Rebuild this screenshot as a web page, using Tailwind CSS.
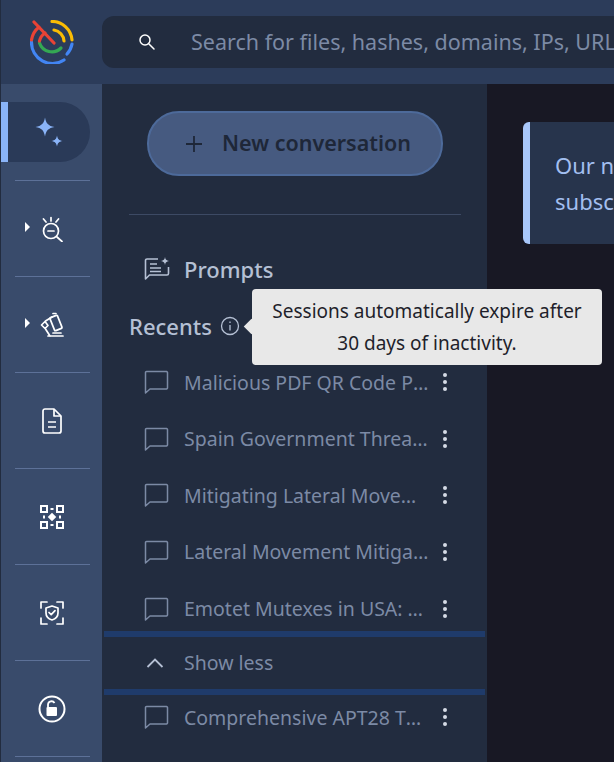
<!DOCTYPE html>
<html><head><meta charset="utf-8"><script src="https://cdn.jsdelivr.net/npm/@tailwindcss/browser@4"></script></head>
<body class="m-0 w-[614px] h-[762px] overflow-hidden bg-[#181824] font-['Noto_Sans',sans-serif]">
<div class="relative flex flex-col w-[614px] h-[762px] overflow-hidden border-l border-l-[#222c3f]">
  <header class="flex h-[84px] shrink-0 items-center bg-[#2c3c5a]">
    <div class="flex w-[101px] shrink-0 justify-center">
      <svg width="44" height="44" viewBox="0 0 44 44" fill="none" stroke-width="3.200" stroke-linecap="round">
        <path d="M22 1.500 A20 20 0 0 1 42 20" stroke="#fbbc04"/>
        <path d="M24 10 A12 12 0 0 1 34 21" stroke="#fbbc04"/>
        <path d="M42 24 A20 20 0 0 1 37 34" stroke="#4285f4"/>
        <path d="M1.500 22 A21 21 0 0 0 34 40" stroke="#4285f4"/>
        <path d="M9.500 23 A13 13 0 0 0 31 28" stroke="#34a853"/>
        <path d="M1.500 20 A21 21 0 0 1 9 7 M4 2 L24 23 M9.500 21 A13 13 0 0 1 15 13" stroke="#ea4335"/>
      </svg>
    </div>
    <div class="flex h-[52px] flex-1 items-center rounded-l-xl bg-[#222c3f]">
      <svg class="ml-[36px] mr-[35px] shrink-0" width="18" height="18" viewBox="0 0 18 18" fill="none" stroke="#fff" stroke-width="1.500" stroke-linecap="round"><circle cx="7" cy="7" r="5"/><path d="M11 11l5 5"/></svg>
      <span class="whitespace-nowrap text-[21.5px] text-[#7c8aa5]">Search for files, hashes, domains, IPs, URLs</span>
    </div>
  </header>
  <div class="flex min-h-0 flex-1">
    <nav class="w-[101px] shrink-0 bg-[#394b6b] pt-[18px]">
      <div class="flex h-[60px] w-[89px] items-center justify-center rounded-r-[30px] border-l-[7px] border-l-[#8ab4f8] bg-[#2a3a58]">
        <svg width="30" height="32" viewBox="0 0 30 32" fill="#8ab4f8"><path d="M11 1.500c1.200 6.200 3.300 8.300 9.500 9.500-6.200 1.200-8.300 3.300-9.500 9.500-1.200-6.200-3.300-8.300-9.500-9.500 6.200-1.200 8.300-3.300 9.500-9.500zM23 19.500c.7 3.600 1.900 4.800 5.500 5.500-3.600.7-4.800 1.900-5.500 5.500-.7-3.600-1.900-4.800-5.500-5.500 3.600-.7 4.800-1.900 5.500-5.500z"/></svg>
      </div>
      <div class="ml-[14px] mr-[12px] mt-[18px] h-px bg-[#5d7198]"></div>
      <div class="relative flex h-[95px] items-center justify-center">
        <span class="absolute left-[24px] top-[41px] h-0 w-0 border-y-[5px] border-l-[5px] border-y-transparent border-l-white"></span>
        <svg width="24" height="26" viewBox="0 0 24 26" fill="none" stroke="#fff" stroke-width="1.700" stroke-linecap="round"><circle cx="11" cy="15" r="7.500"/><path d="M8 15h6M17 21l5 4.500M11 1.500v3.500M3.500 3l2.500 3M18.500 3l-2.500 3"/></svg>
      </div>
      <div class="ml-[14px] mr-[12px] h-px bg-[#5d7198]"></div>
      <div class="relative flex h-[95px] items-center justify-center">
        <span class="absolute left-[24px] top-[41px] h-0 w-0 border-y-[5px] border-l-[5px] border-y-transparent border-l-white"></span>
        <svg width="24" height="26" viewBox="0 0 24 26" fill="none" stroke="#fff" stroke-width="1.700" stroke-linejoin="round" stroke-linecap="round"><rect x="12" y="4" width="8" height="14" rx="1" transform="rotate(-22 16 11)"/><path d="M5 9.500L1.500 13 5 16.500 8 13.500zM5.500 9L12 5M5.500 17L10 24M8 24h15M13 21h8M13 1.500h3"/></svg>
      </div>
      <div class="ml-[14px] mr-[12px] h-px bg-[#5d7198]"></div>
      <div class="flex h-[95px] items-center justify-center">
        <svg width="20" height="26" viewBox="0 0 20 26" fill="none" stroke="#fff" stroke-width="1.700" stroke-linejoin="round"><path d="M3 1h9l7 7v15a2 2 0 0 1-2 2H3a2 2 0 0 1-2-2V3a2 2 0 0 1 2-2z"/><path d="M12 1v7h7M6 14h8M6 19h8"/></svg>
      </div>
      <div class="ml-[14px] mr-[12px] h-px bg-[#5d7198]"></div>
      <div class="flex h-[95px] items-center justify-center">
        <svg width="24" height="24" viewBox="0 0 24 24" fill="none" stroke="#fff" stroke-width="2"><rect x="1" y="1" width="6" height="6"/><rect x="17" y="1" width="6" height="6"/><rect x="1" y="17" width="6" height="6"/><rect x="17" y="17" width="6" height="6"/><path d="M10.500 4h3M10.500 20h3M4 10.500v3M20 10.500v3"/><rect x="9" y="9" width="6" height="6" fill="#fff" stroke="none" transform="rotate(45 12 12)"/></svg>
      </div>
      <div class="ml-[14px] mr-[12px] h-px bg-[#5d7198]"></div>
      <div class="flex h-[95px] items-center justify-center">
        <svg width="24" height="24" viewBox="0 0 24 24" fill="none" stroke="#fff" stroke-width="1.700" stroke-linecap="round" stroke-linejoin="round"><path d="M1 7V1h6M17 1h6v6M1 17v6h6M23 17v6h-6"/><path d="M12 5l6 2v5c0 4-3 6-6 7-3-1-6-3-6-7V7z"/><path d="M9 11.500l2.200 2.200 3.800-4"/></svg>
      </div>
      <div class="ml-[14px] mr-[12px] h-px bg-[#5d7198]"></div>
      <div class="flex h-[95px] items-center justify-center">
        <svg width="28" height="28" viewBox="0 0 28 28" fill="none" stroke="#fff" stroke-width="2"><circle cx="14" cy="14" r="12.500"/><rect x="8.500" y="12" width="10.500" height="9" rx="1" fill="#fff" stroke="none"/><path d="M10 12V9.500a3.500 3.500 0 0 1 6.500-1.500" stroke-width="1.800"/></svg>
      </div>
      <div class="ml-[14px] mr-[12px] h-px bg-[#5d7198]"></div>
    </nav>
    <aside class="w-[385px] shrink-0 bg-[#222c3f]">
      <div class="pl-[45px] pt-[27px]">
        <div class="flex h-[65px] w-[296px] items-center rounded-[32px] border-2 border-[#4d6a9a] bg-[#465a80] pl-[36px]">
          <svg width="18" height="18" viewBox="0 0 18 18" stroke="#1e2738" stroke-width="1.800" fill="none"><path d="M9 1v16M1 9h16"/></svg>
          <span class="ml-[19px] text-[21.5px] font-semibold text-[#1e2738]">New conversation</span>
        </div>
      </div>
      <div class="ml-[27px] mt-[38px] h-px w-[332px] bg-[#3d4a64]"></div>
      <div class="mt-[34px] flex h-[40px] items-center pl-[42px]">
        <svg width="26" height="26" viewBox="0 0 26 26" fill="none" stroke="#b5c0d4" stroke-width="1.600" stroke-linejoin="round"><path d="M14 3H3a1.500 1.500 0 0 0-1.500 1.500V23l4-4H23a1.500 1.500 0 0 0 1.500-1.500V11"/><path d="M6 8h7M6 12h11M6 15.500h11" /><path d="M21 1c.4 2.600 1.400 3.600 4 4-2.600.4-3.600 1.400-4 4-.4-2.600-1.400-3.600-4-4 2.600-.4 3.600-1.400 4-4z" fill="#b5c0d4" stroke="none"/></svg>
        <span class="ml-[14px] text-[22px] font-medium text-[#b5c0d4]">Prompts</span>
      </div>
      <div class="mt-[17px] flex h-[40px] items-center pl-[27px]">
        <span class="text-[22px] font-medium text-[#b5c0d4]">Recents</span>
        <svg class="ml-[8px]" width="20" height="20" viewBox="0 0 20 20" fill="none" stroke="#b5c0d4" stroke-width="1.300"><circle cx="10" cy="10" r="8.500"/><path d="M10 9v5.500M10 5.500v1.500"/></svg>
      </div>
      <ul class="mt-[8px] text-[19.5px] text-[#7c8aa5]">
        <li class="flex h-[56.6px] items-center pl-[42px]"><svg class="shrink-0" width="25" height="24" viewBox="0 0 25 24" fill="none" stroke="#7c8aa5" stroke-width="1.500" stroke-linejoin="round"><path d="M2.500 1.500h20a1.500 1.500 0 0 1 1 1V18a1.500 1.500 0 0 1-1 1H6l-4.500 4V2.500a1 1 0 0 1 1-1z"/></svg><span class="ml-[15px] w-[245px] truncate">Malicious PDF QR Code Phishing</span><svg class="ml-[13px]" width="6" height="20" viewBox="0 0 6 20" fill="#d5dbe6"><circle cx="3" cy="3" r="2"/><circle cx="3" cy="10" r="2"/><circle cx="3" cy="17" r="2"/></svg></li>
        <li class="flex h-[56.6px] items-center pl-[42px]"><svg class="shrink-0" width="25" height="24" viewBox="0 0 25 24" fill="none" stroke="#7c8aa5" stroke-width="1.500" stroke-linejoin="round"><path d="M2.500 1.500h20a1.500 1.500 0 0 1 1 1V18a1.500 1.500 0 0 1-1 1H6l-4.500 4V2.500a1 1 0 0 1 1-1z"/></svg><span class="ml-[15px] w-[245px] truncate">Spain Government Threat Actors</span><svg class="ml-[13px]" width="6" height="20" viewBox="0 0 6 20" fill="#d5dbe6"><circle cx="3" cy="3" r="2"/><circle cx="3" cy="10" r="2"/><circle cx="3" cy="17" r="2"/></svg></li>
        <li class="flex h-[56.6px] items-center pl-[42px]"><svg class="shrink-0" width="25" height="24" viewBox="0 0 25 24" fill="none" stroke="#7c8aa5" stroke-width="1.500" stroke-linejoin="round"><path d="M2.500 1.500h20a1.500 1.500 0 0 1 1 1V18a1.500 1.500 0 0 1-1 1H6l-4.500 4V2.500a1 1 0 0 1 1-1z"/></svg><span class="ml-[15px] w-[245px] truncate">Mitigating Lateral Movement Risks</span><svg class="ml-[13px]" width="6" height="20" viewBox="0 0 6 20" fill="#d5dbe6"><circle cx="3" cy="3" r="2"/><circle cx="3" cy="10" r="2"/><circle cx="3" cy="17" r="2"/></svg></li>
        <li class="flex h-[56.6px] items-center pl-[42px]"><svg class="shrink-0" width="25" height="24" viewBox="0 0 25 24" fill="none" stroke="#7c8aa5" stroke-width="1.500" stroke-linejoin="round"><path d="M2.500 1.500h20a1.500 1.500 0 0 1 1 1V18a1.500 1.500 0 0 1-1 1H6l-4.500 4V2.500a1 1 0 0 1 1-1z"/></svg><span class="ml-[15px] w-[245px] truncate">Lateral Movement Mitigation Plan</span><svg class="ml-[13px]" width="6" height="20" viewBox="0 0 6 20" fill="#d5dbe6"><circle cx="3" cy="3" r="2"/><circle cx="3" cy="10" r="2"/><circle cx="3" cy="17" r="2"/></svg></li>
        <li class="flex h-[56.6px] items-center pl-[42px]"><svg class="shrink-0" width="25" height="24" viewBox="0 0 25 24" fill="none" stroke="#7c8aa5" stroke-width="1.500" stroke-linejoin="round"><path d="M2.500 1.500h20a1.500 1.500 0 0 1 1 1V18a1.500 1.500 0 0 1-1 1H6l-4.500 4V2.500a1 1 0 0 1 1-1z"/></svg><span class="ml-[15px] w-[245px] truncate">Emotet Mutexes in USA: Analysis</span><svg class="ml-[13px]" width="6" height="20" viewBox="0 0 6 20" fill="#d5dbe6"><circle cx="3" cy="3" r="2"/><circle cx="3" cy="10" r="2"/><circle cx="3" cy="17" r="2"/></svg></li>
      </ul>
      <div class="ml-[2px] h-[6px] w-[381px] bg-[#1f3b6b] -mt-[6px]"></div>
      <div class="flex h-[52px] items-center pl-[44px] text-[19.5px] text-[#7c8aa5]">
        <svg width="18" height="12" viewBox="0 0 18 12" fill="none" stroke="#b5c0d4" stroke-width="1.800"><path d="M1.500 10L9 2.500 16.500 10"/></svg>
        <span class="ml-[20px]">Show less</span>
      </div>
      <div class="ml-[2px] h-[6px] w-[381px] bg-[#1f3b6b]"></div>
      <div class="flex h-[45px] items-center pl-[42px] text-[19.5px] text-[#7c8aa5]"><svg class="shrink-0" width="25" height="24" viewBox="0 0 25 24" fill="none" stroke="#7c8aa5" stroke-width="1.500" stroke-linejoin="round"><path d="M2.500 1.500h20a1.500 1.500 0 0 1 1 1V18a1.500 1.500 0 0 1-1 1H6l-4.500 4V2.500a1 1 0 0 1 1-1z"/></svg><span class="ml-[15px] w-[245px] truncate">Comprehensive APT28 Threat Report</span><svg class="ml-[13px]" width="6" height="20" viewBox="0 0 6 20" fill="#d5dbe6"><circle cx="3" cy="3" r="2"/><circle cx="3" cy="10" r="2"/><circle cx="3" cy="17" r="2"/></svg></div>
    </aside>
    <main class="min-w-0 flex-1 pl-[36px] pt-[38px]">
      <div class="h-[122px] w-[200px] rounded-l-[6px] border-l-[7px] border-l-[#a8c7fa] bg-[#27344c] pl-[25px] pt-[25px] text-[22px] leading-[36px] text-[#a3bff0] whitespace-nowrap">Our new<br>subscription</div>
    </main>
  </div>
  <div class="absolute left-[251px] top-[289px] flex h-[76px] w-[350px] items-center justify-center rounded-[4px] bg-[#e8e8e8] text-center text-[19px] leading-[32px] text-[#1f1f2b]">
    <span class="absolute -left-[6px] top-[32px] h-[11px] w-[11px] rotate-45 bg-[#e8e8e8]"></span>
    <span class="relative">Sessions automatically expire after<br>30 days of inactivity.</span>
  </div>
</div>
</body></html>
